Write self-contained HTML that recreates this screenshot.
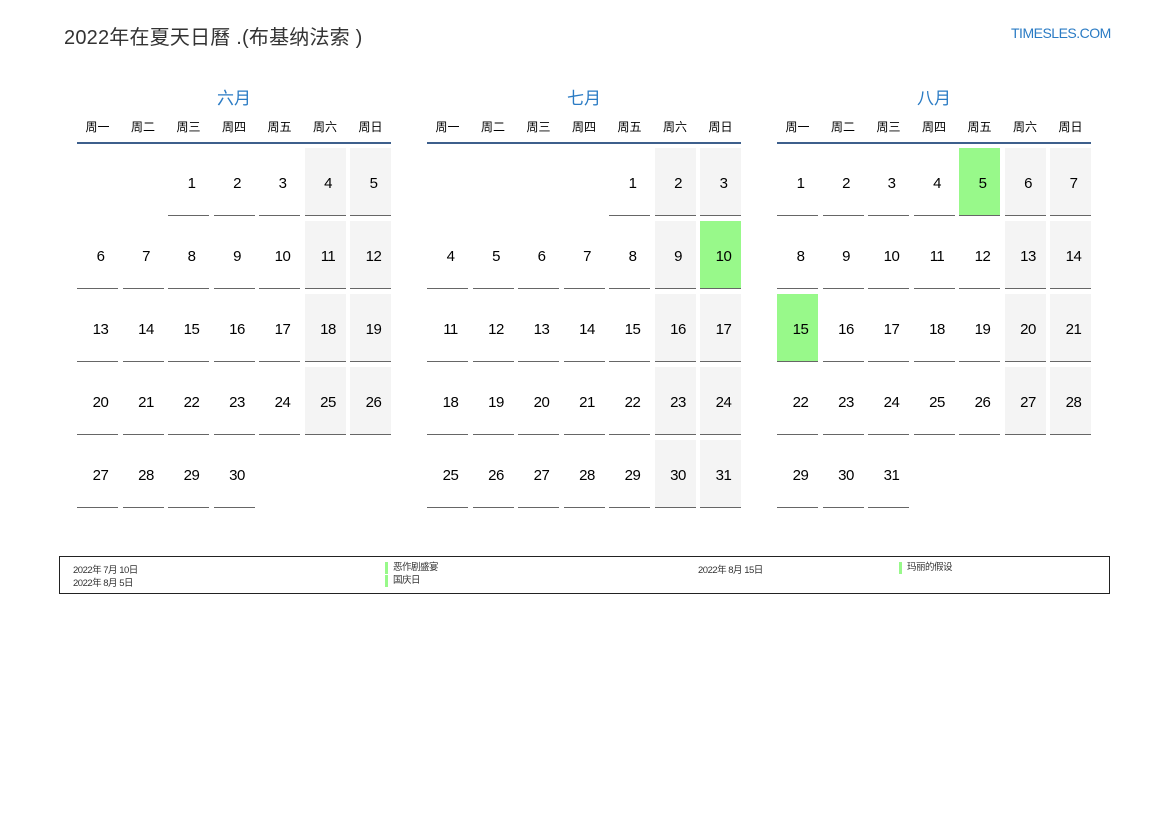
<!DOCTYPE html>
<html><head><meta charset="utf-8">
<style>
body{margin:0;width:1169px;height:827px;background:#fff;font-family:"Liberation Sans","Noto Sans CJK SC",sans-serif;position:relative;overflow:hidden;color:#000}
.title{position:absolute;left:64px;top:21px;font-size:20px;color:#333;letter-spacing:0.2px}
.site{position:absolute;left:1011px;top:25px;font-size:14px;color:#2a7bc4;letter-spacing:-0.5px}
.month{position:absolute;top:84px;width:314px}
.mt{text-align:center;font-size:17px;color:#2a7bc4;height:24px}
.wd{display:grid;grid-template-columns:repeat(7,41px);column-gap:4.5px;font-size:12px;text-align:center;margin-top:10px;height:24px;border-bottom:2px solid #3d5f8c;width:314px}
.g{display:grid;grid-template-columns:repeat(7,41px);grid-auto-rows:68px;column-gap:4.5px;row-gap:5px;margin-top:4px}
.g div{display:flex;align-items:center;justify-content:center;font-size:15px;border-bottom:1.5px solid #666;box-sizing:border-box;letter-spacing:-0.5px;padding:4px 0 0 6px}
.g div.e{border:none}
.g div.w{background:#f4f4f4}
.g div.h{background:#98f98a}
.foot{position:absolute;left:59px;top:556px;width:1049px;height:36px;border:1px solid #222;font-size:9.5px;color:#333}
.foot span{position:absolute;letter-spacing:-0.5px}
.bar{border-left:3px solid #98f98a;padding-left:5px;line-height:12px}
</style></head><body>
<div class="title">2022年在夏天日曆 .(布基纳法索 )</div>
<div class="site">TIMESLES.COM</div>

<div class="month" style="left:77px">
<div class="mt">六月</div>
<div class="wd"><span>周一</span><span>周二</span><span>周三</span><span>周四</span><span>周五</span><span>周六</span><span>周日</span></div>
<div class="g">
<div class="e"></div><div class="e"></div><div>1</div><div>2</div><div>3</div><div class="w">4</div><div class="w">5</div>
<div>6</div><div>7</div><div>8</div><div>9</div><div>10</div><div class="w">11</div><div class="w">12</div>
<div>13</div><div>14</div><div>15</div><div>16</div><div>17</div><div class="w">18</div><div class="w">19</div>
<div>20</div><div>21</div><div>22</div><div>23</div><div>24</div><div class="w">25</div><div class="w">26</div>
<div>27</div><div>28</div><div>29</div><div>30</div>
</div></div>

<div class="month" style="left:427px">
<div class="mt">七月</div>
<div class="wd"><span>周一</span><span>周二</span><span>周三</span><span>周四</span><span>周五</span><span>周六</span><span>周日</span></div>
<div class="g">
<div class="e"></div><div class="e"></div><div class="e"></div><div class="e"></div><div>1</div><div class="w">2</div><div class="w">3</div>
<div>4</div><div>5</div><div>6</div><div>7</div><div>8</div><div class="w">9</div><div class="h">10</div>
<div>11</div><div>12</div><div>13</div><div>14</div><div>15</div><div class="w">16</div><div class="w">17</div>
<div>18</div><div>19</div><div>20</div><div>21</div><div>22</div><div class="w">23</div><div class="w">24</div>
<div>25</div><div>26</div><div>27</div><div>28</div><div>29</div><div class="w">30</div><div class="w">31</div>
</div></div>

<div class="month" style="left:777px">
<div class="mt">八月</div>
<div class="wd"><span>周一</span><span>周二</span><span>周三</span><span>周四</span><span>周五</span><span>周六</span><span>周日</span></div>
<div class="g">
<div>1</div><div>2</div><div>3</div><div>4</div><div class="h">5</div><div class="w">6</div><div class="w">7</div>
<div>8</div><div>9</div><div>10</div><div>11</div><div>12</div><div class="w">13</div><div class="w">14</div>
<div class="h">15</div><div>16</div><div>17</div><div>18</div><div>19</div><div class="w">20</div><div class="w">21</div>
<div>22</div><div>23</div><div>24</div><div>25</div><div>26</div><div class="w">27</div><div class="w">28</div>
<div>29</div><div>30</div><div>31</div>
</div></div>

<div class="foot">
<span style="left:13px;top:5px">2022年 7月 10日</span>
<span style="left:13px;top:18px">2022年 8月 5日</span>
<span class="bar" style="left:325px;top:5px">恶作剧盛宴</span>
<span class="bar" style="left:325px;top:18px">国庆日</span>
<span style="left:638px;top:5px">2022年 8月 15日</span>
<span class="bar" style="left:839px;top:5px">玛丽的假设</span>
</div>
</body></html>
